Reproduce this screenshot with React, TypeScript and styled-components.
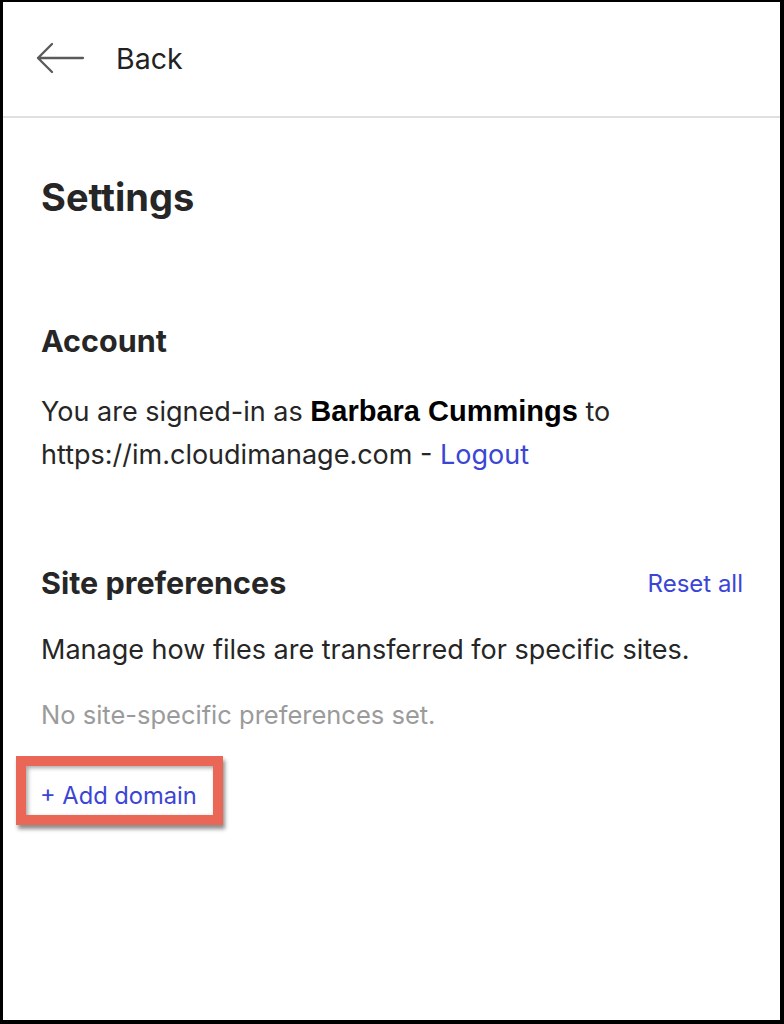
import React from "react";
import styled, { createGlobalStyle } from "styled-components";

const Global = createGlobalStyle`
  html, body { margin: 0; padding: 0; background: #fff; }
  body { font-family: Inter, "Noto Sans", sans-serif; }
`;

const Frame = styled.div`
  box-sizing: border-box;
  width: 784px;
  height: 1024px;
  border-style: solid;
  border-color: #000;
  border-width: 2px 4px 4px 3px;
  background: #fff;
  display: flex;
  flex-direction: column;
`;

const Header = styled.header`
  height: 116px;
  display: flex;
  align-items: center;
  gap: 31px;
  padding: 0 0 2px 32px;
  border-bottom: 2px solid #e0e0e0;
  box-sizing: border-box;
  flex-shrink: 0;
`;

const BackLabel = styled.span`
  font-size: 28.5px;
  color: #222;
`;

const Content = styled.main`
  padding: 57px 37px 0 38px;
  display: flex;
  flex-direction: column;
`;

const Title = styled.h1`
  margin: 0;
  font-size: 38px;
  font-weight: 700;
  color: #262626;
  line-height: 44px;
`;

const Section = styled.section<{ $top: number }>`
  margin-top: ${(p) => p.$top}px;
  display: flex;
  flex-direction: column;
`;

const SectionHead = styled.div`
  display: flex;
  align-items: center;
  justify-content: space-between;
`;

const SectionTitle = styled.h2`
  margin: 0;
  font-size: 30.5px;
  font-weight: 700;
  color: #262626;
  line-height: 36px;
`;

const Body = styled.p<{ $top: number }>`
  margin: ${(p) => p.$top}px 0 0;
  font-size: 27px;
  line-height: 43px;
  color: #262626;
`;

const Strong = styled.b`
  font-family: "Liberation Sans", Arial, sans-serif;
  font-size: 29px;
  line-height: 1;
  font-weight: 700;
  color: #000;
`;

const Link = styled.a<{ $size?: number }>`
  color: #3b45d6;
  text-decoration: none;
  font-size: ${(p) => (p.$size ? `${p.$size}px` : "inherit")};
  cursor: pointer;
`;

const Muted = styled.p`
  margin: 28px 0 0;
  font-size: 25.5px;
  line-height: 32px;
  color: #9b9b9b;
`;

const Highlight = styled.div`
  margin: 25px 0 0 -25px;
  align-self: flex-start;
  border: 10px solid #ea6656;
  box-shadow: 2px 4px 4px rgba(0, 0, 0, 0.45), inset 2px 2px 4px rgba(0, 0, 0, 0.35);
  padding: 16px 16px 5px 14px;
  background: #fff;
`;

const AddLink = styled.a`
  color: #3b45d6;
  font-size: 23.7px;
  line-height: 28px;
  text-decoration: none;
  display: block;
`;

function BackArrow() {
  return (
    <svg width="50" height="34" viewBox="0 0 50 34" fill="none">
      <path d="M48 17H3M17 3L3 17l14 14" stroke="#5a5a5a" strokeWidth="2.3" strokeLinecap="round" strokeLinejoin="round" />
    </svg>
  );
}

export default function App() {
  return (
    <>
      <Global />
      <Frame>
        <Header>
          <BackArrow />
          <BackLabel>Back</BackLabel>
        </Header>
        <Content>
          <Title>Settings</Title>
          <Section $top={104}>
            <SectionTitle>Account</SectionTitle>
            <Body $top={31}>
              You are signed-in as <Strong>Barbara Cummings</Strong> to https://im.cloudimanage.com - <Link>Logout</Link>
            </Body>
          </Section>
          <Section $top={89}>
            <SectionHead>
              <SectionTitle>Site preferences</SectionTitle>
              <Link $size={24}>Reset all</Link>
            </SectionHead>
            <Body $top={27}>Manage how files are transferred for specific sites.</Body>
            <Muted>No site-specific preferences set.</Muted>
            <Highlight>
              <AddLink>+ Add domain</AddLink>
            </Highlight>
          </Section>
        </Content>
      </Frame>
    </>
  );
}
